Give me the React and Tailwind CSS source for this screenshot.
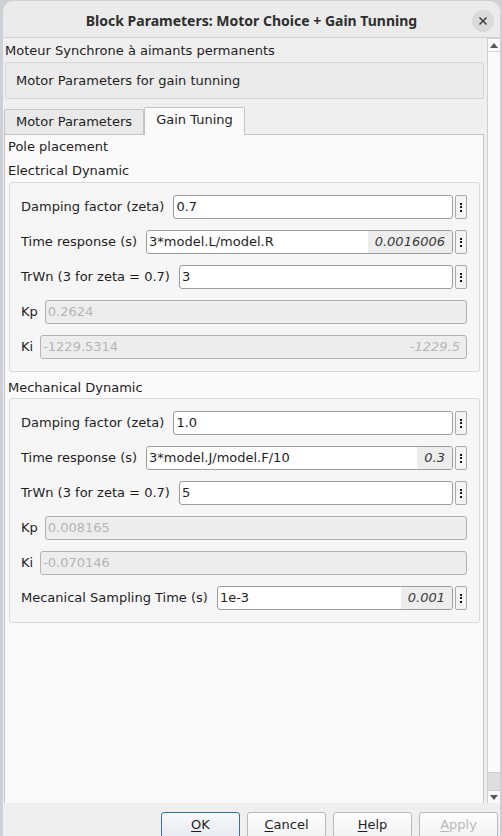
import React from 'react';

const Dots = () => (
  <div className="ml-[2px] flex h-[24px] w-[12px] shrink-0 flex-col items-center justify-center gap-[1.5px] rounded-[2px] border border-[#a9a9a9] bg-[#f4f4f4]">
    <div className="h-[2px] w-[2px] bg-[#111]" />
    <div className="h-[2px] w-[2px] bg-[#111]" />
    <div className="h-[2px] w-[2px] bg-[#111]" />
  </div>
);

const EditRow = ({ label, value, evaluated }) => (
  <div className="flex h-[24px] items-center">
    <span className="mr-[9px] whitespace-nowrap">{label}</span>
    <div className="flex h-[24px] flex-1 items-stretch overflow-hidden rounded-[3px] border border-[#9d9d9d] bg-white">
      <span className="flex flex-1 items-center pl-[2px]">{value}</span>
      {evaluated && (
        <span className="flex items-center bg-[#ededed] px-[7px] italic text-[#3a3a3a]">{evaluated}</span>
      )}
    </div>
    <Dots />
  </div>
);

const ReadRow = ({ label, value, evaluated }) => (
  <div className="flex h-[24px] items-center">
    <span className="mr-[7px] whitespace-nowrap">{label}</span>
    <div className="flex h-[24px] flex-1 items-center justify-between rounded-[3px] border border-[#b2b2b2] bg-[#ededed] pl-[2px] pr-[6px] text-[#b5b5b5]">
      <span>{value}</span>
      {evaluated && <span className="italic">{evaluated}</span>}
    </div>
  </div>
);

const Group = ({ children }) => (
  <div className="ml-[1px] mr-[3px] flex flex-col gap-[11px] rounded-[3px] border border-[#d9d9d9] bg-[#f6f6f6] pb-[12px] pl-[11px] pr-[12px] pt-[12px]">
    {children}
  </div>
);

const Button = ({ first, rest, primary, disabled }) => (
  <div
    className={
      primary
        ? 'flex h-[30px] w-[79px] items-start justify-center rounded-[3px] border border-[#3a71a3] bg-gradient-to-b from-[#f7f9fb] to-[#e4e9ee] pt-[4px]'
        : 'flex h-[30px] w-[79px] items-start justify-center rounded-[3px] border border-[#b9b9b9] bg-gradient-to-b from-[#fdfdfd] to-[#f1f1f1] pt-[4px]'
    }
  >
    <span className={disabled ? 'text-[#b8b8b8]' : 'text-[#1e1e1e]'}>
      <span className="underline underline-offset-[2px]">{first}</span>
      {rest}
    </span>
  </div>
);

export default function App() {
  return (
    <div className="h-[836px] w-[502px] overflow-hidden bg-[#cdd1d5] font-['DejaVu_Sans',sans-serif] text-[13px] leading-[16px] text-[#1e1e1e]">
      <div className="ml-[3px] mt-[1px] flex h-[835px] w-[497px] flex-col">
        {/* title bar */}
        <div className="relative flex h-[37px] shrink-0 items-center justify-center rounded-t-[10px] border-b border-[#d2d2d2] bg-[#ebebeb] pt-[3px]">
          <span className="font-['Noto_Sans',sans-serif] text-[14px] font-bold text-[#2e2e2e]">
            Block Parameters: Motor Choice + Gain Tunning
          </span>
          <div className="absolute right-[6px] top-[9px] flex h-[22px] w-[22px] items-center justify-center rounded-full bg-[#dadada]">
            <svg width="10" height="10" viewBox="0 0 10 10">
              <path d="M1.5 1.5 L8.5 8.5 M8.5 1.5 L1.5 8.5" stroke="#333" strokeWidth="1.4" />
            </svg>
          </div>
        </div>

        {/* body */}
        <div className="flex h-[765px] shrink-0 bg-[#efefef]">
          <div className="flex flex-1 flex-col pl-[1px] pr-[3px]">
            <div className="pl-[1px] pt-[5px]">Moteur Synchrone à aimants permanents</div>
            <div className="ml-[1px] mt-[3px] flex h-[37px] items-center rounded-[2px] border border-[#d5d5d5] bg-[#ebebeb] pl-[10px]">
              Motor Parameters for gain tunning
            </div>

            {/* tabs */}
            <div className="relative z-10 mt-[7px] flex h-[28px] items-end">
              <div className="flex h-[25px] w-[140px] items-center justify-center rounded-t-[2px] border border-b-0 border-[#c4c4c4] bg-[#e9e9e9] pb-[1px]">
                Motor Parameters
              </div>
              <div className="-mb-[1px] flex h-[28px] w-[101px] items-center justify-center rounded-t-[2px] border border-b-0 border-[#c4c4c4] bg-[#fafafa] pb-[4px]">
                Gain Tuning
              </div>
            </div>

            {/* tab panel */}
            <div className="flex flex-1 flex-col border border-b-0 border-[#c4c4c4] bg-[#fafafa] pl-[3px] pt-[4px]">
              <div>Pole placement</div>
              <div className="mt-[8px]">Electrical Dynamic</div>
              <div className="mt-[3px]">
                <Group>
                  <EditRow label="Damping factor (zeta)" value="0.7" />
                  <EditRow label="Time response (s)" value="3*model.L/model.R" evaluated="0.0016006" />
                  <EditRow label="TrWn (3 for zeta = 0.7)" value="3" />
                  <ReadRow label="Kp" value="0.2624" />
                  <ReadRow label="Ki" value="-1229.5314" evaluated="-1229.5" />
                </Group>
              </div>
              <div className="mt-[8px]">Mechanical Dynamic</div>
              <div className="mt-[2px]">
                <Group>
                  <EditRow label="Damping factor (zeta)" value="1.0" />
                  <EditRow label="Time response (s)" value="3*model.J/model.F/10" evaluated="0.3" />
                  <EditRow label="TrWn (3 for zeta = 0.7)" value="5" />
                  <ReadRow label="Kp" value="0.008165" />
                  <ReadRow label="Ki" value="-0.070146" />
                  <EditRow label="Mecanical Sampling Time (s)" value="1e-3" evaluated="0.001" />
                </Group>
              </div>
            </div>
          </div>

          {/* scrollbar */}
          <div className="flex w-[13px] flex-col border-l border-t border-[#cfcfcf] bg-[#fafafa]">
            <div className="flex h-[13px] items-center justify-center border-b border-[#d6d6d6]">
              <svg width="8" height="5" viewBox="0 0 8 5">
                <path d="M0 5 L4 0 L8 5 Z" fill="#555" />
              </svg>
            </div>
            <div className="flex-1" />
            <div className="h-[19px] border-y border-[#d0d0d0] bg-[#dedede]" />
            <div className="flex h-[12px] items-center justify-center">
              <svg width="8" height="5" viewBox="0 0 8 5">
                <path d="M0 0 L4 5 L8 0 Z" fill="#555" />
              </svg>
            </div>
          </div>
        </div>

        {/* button bar */}
        <div className="flex flex-1 justify-end gap-[7px] bg-[#efefef] pr-[2px] pt-[9px]">
          <Button first="O" rest="K" primary />
          <Button first="C" rest="ancel" />
          <Button first="H" rest="elp" />
          <Button first="A" rest="pply" disabled />
        </div>
      </div>
    </div>
  );
}
